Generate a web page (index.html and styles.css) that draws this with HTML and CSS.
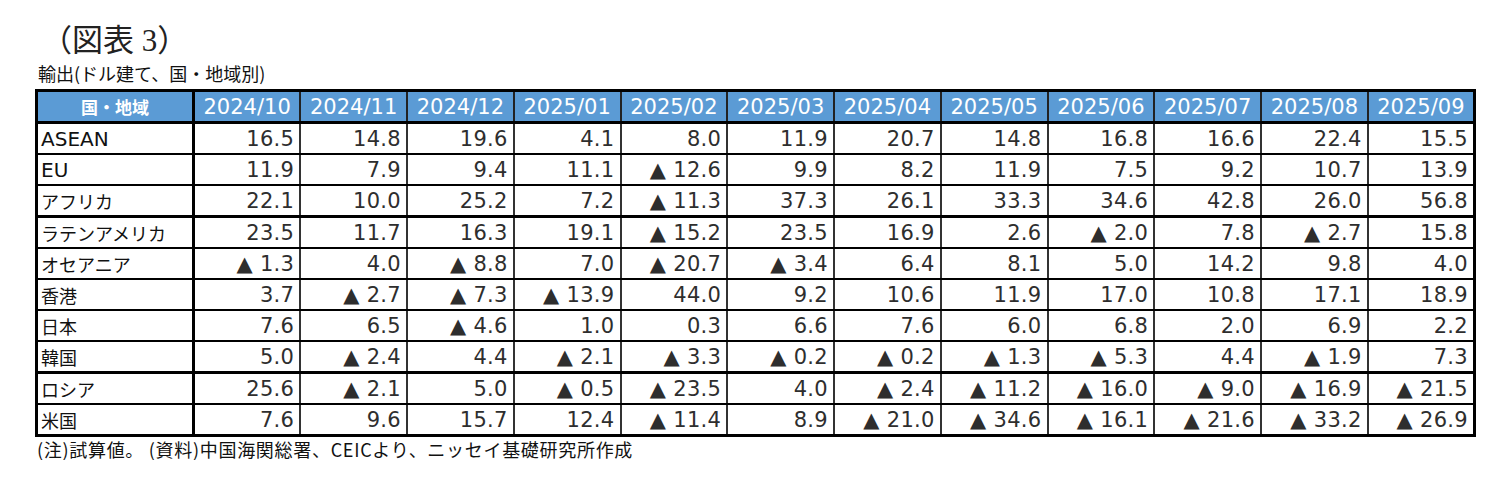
FILE: index.html
```html
<!DOCTYPE html>
<html lang="ja">
<head>
<meta charset="utf-8">
<link rel="stylesheet" href="styles.css">
</head>
<body>
<div class="page">
  <div class="title">（図表 3）</div>
  <div class="subtitle">輸出(ドル建て、国・地域別)</div>
  <table class="grid">
    <colgroup>
      <col class="c-label">
      <col span="12" class="c-num">
    </colgroup>
    <thead>
      <tr>
        <th class="h-label">国・地域</th>
        <th>2024/10</th><th>2024/11</th><th>2024/12</th><th>2025/01</th><th>2025/02</th><th>2025/03</th>
        <th>2025/04</th><th>2025/05</th><th>2025/06</th><th>2025/07</th><th>2025/08</th><th>2025/09</th>
      </tr>
    </thead>
    <tbody>
      <tr><td class="lab lat">ASEAN</td><td>16.5</td><td>14.8</td><td>19.6</td><td>4.1</td><td>8.0</td><td>11.9</td><td>20.7</td><td>14.8</td><td>16.8</td><td>16.6</td><td>22.4</td><td>15.5</td></tr>
      <tr><td class="lab lat">EU</td><td>11.9</td><td>7.9</td><td>9.4</td><td>11.1</td><td>▲ 12.6</td><td>9.9</td><td>8.2</td><td>11.9</td><td>7.5</td><td>9.2</td><td>10.7</td><td>13.9</td></tr>
      <tr class="thick"><td class="lab">アフリカ</td><td>22.1</td><td>10.0</td><td>25.2</td><td>7.2</td><td>▲ 11.3</td><td>37.3</td><td>26.1</td><td>33.3</td><td>34.6</td><td>42.8</td><td>26.0</td><td>56.8</td></tr>
      <tr><td class="lab">ラテンアメリカ</td><td>23.5</td><td>11.7</td><td>16.3</td><td>19.1</td><td>▲ 15.2</td><td>23.5</td><td>16.9</td><td>2.6</td><td>▲ 2.0</td><td>7.8</td><td>▲ 2.7</td><td>15.8</td></tr>
      <tr><td class="lab">オセアニア</td><td>▲ 1.3</td><td>4.0</td><td>▲ 8.8</td><td>7.0</td><td>▲ 20.7</td><td>▲ 3.4</td><td>6.4</td><td>8.1</td><td>5.0</td><td>14.2</td><td>9.8</td><td>4.0</td></tr>
      <tr><td class="lab">香港</td><td>3.7</td><td>▲ 2.7</td><td>▲ 7.3</td><td>▲ 13.9</td><td>44.0</td><td>9.2</td><td>10.6</td><td>11.9</td><td>17.0</td><td>10.8</td><td>17.1</td><td>18.9</td></tr>
      <tr><td class="lab">日本</td><td>7.6</td><td>6.5</td><td>▲ 4.6</td><td>1.0</td><td>0.3</td><td>6.6</td><td>7.6</td><td>6.0</td><td>6.8</td><td>2.0</td><td>6.9</td><td>2.2</td></tr>
      <tr class="thick"><td class="lab">韓国</td><td>5.0</td><td>▲ 2.4</td><td>4.4</td><td>▲ 2.1</td><td>▲ 3.3</td><td>▲ 0.2</td><td>▲ 0.2</td><td>▲ 1.3</td><td>▲ 5.3</td><td>4.4</td><td>▲ 1.9</td><td>7.3</td></tr>
      <tr><td class="lab">ロシア</td><td>25.6</td><td>▲ 2.1</td><td>5.0</td><td>▲ 0.5</td><td>▲ 23.5</td><td>4.0</td><td>▲ 2.4</td><td>▲ 11.2</td><td>▲ 16.0</td><td>▲ 9.0</td><td>▲ 16.9</td><td>▲ 21.5</td></tr>
      <tr><td class="lab">米国</td><td>7.6</td><td>9.6</td><td>15.7</td><td>12.4</td><td>▲ 11.4</td><td>8.9</td><td>▲ 21.0</td><td>▲ 34.6</td><td>▲ 16.1</td><td>▲ 21.6</td><td>▲ 33.2</td><td>▲ 26.9</td></tr>
    </tbody>
  </table>
  <div class="note">(注)試算値。 (資料)中国海関総署、CEICより、ニッセイ基礎研究所作成</div>
</div>
</body>
</html>
```

FILE: styles.css
```css
html, body {
  margin: 0;
  padding: 0;
  background: #ffffff;
}

.page {
  padding: 22px 0 0 35px;
  color: #111;
}

.title {
  font-family: "Liberation Serif", "Noto Sans CJK JP", serif;
  font-size: 31px;
  line-height: 38px;
  margin-left: 6px;
  color: #222;
}

.subtitle {
  font-family: "Noto Sans CJK JP", sans-serif;
  font-size: 18px;
  line-height: 22px;
  margin: 2px 0 5px 3px;
  color: #111;
}

.grid {
  border-collapse: collapse;
  table-layout: fixed;
  width: 1438px;
  border: 3px solid #000;
}

.c-label { width: 157px; }
.c-num { width: 106.75px; }

.grid th {
  font-family: "DejaVu Sans", sans-serif;
  font-size: 21px;
  background: #5b9bd5;
  color: #ffffff;
  font-weight: normal;
  height: 29px;
  padding: 0;
  text-align: center;
  border-left: 2px solid #222;
  border-bottom: 3px solid #000;
  line-height: 28px;
  white-space: nowrap;
}

.grid th.h-label {
  font-family: "Noto Sans CJK JP", sans-serif;
  font-weight: bold;
  font-size: 17px;
  border-right: 3px solid #000;
}

.grid td {
  font-family: "DejaVu Sans", sans-serif;
  font-size: 21px;
  letter-spacing: 0.3px;
  height: 29px;
  padding: 0 5px 0 4px;
  text-align: right;
  border-left: 2px solid #333;
  border-bottom: 2px solid #000;
  line-height: 28px;
  color: #2e2e2e;
  white-space: nowrap;
}

.grid tr.thick td {
  border-bottom: 3px solid #000;
}

.grid td.lab {
  text-align: left;
  font-family: "Noto Sans CJK JP", sans-serif;
  font-size: 18px;
  letter-spacing: 0;
  padding-left: 3px;
  border-right: 3px solid #000;
  color: #111;
}

.grid td.lab.lat {
  font-family: "DejaVu Sans", sans-serif;
  font-size: 20px;
}

.note {
  font-family: "Noto Sans CJK JP", sans-serif;
  font-size: 18px;
  letter-spacing: 0.7px;
  line-height: 22px;
  margin: 1px 0 0 2px;
  color: #111;
}
```
